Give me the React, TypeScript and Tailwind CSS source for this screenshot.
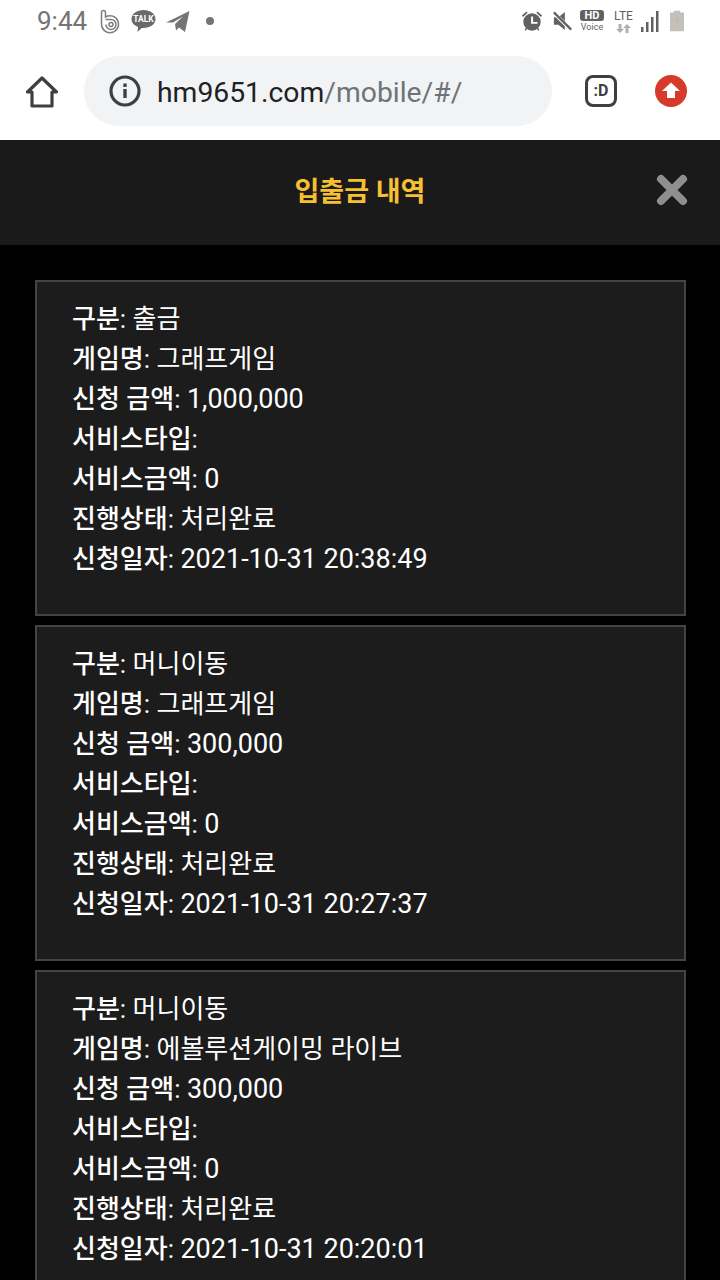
const records = [
  { type: '출금', game: '그래프게임', amount: '1,000,000', date: '2021-10-31 20:38:49' },
  { type: '머니이동', game: '그래프게임', amount: '300,000', date: '2021-10-31 20:27:37' },
  { type: '머니이동', game: '에볼루션게이밍 라이브', amount: '300,000', date: '2021-10-31 20:20:01' },
]

function Row({ label, value, num }: { label: string; value?: string; num?: boolean }) {
  return (
    <div className="h-10 leading-10 whitespace-nowrap">
      <b className="font-medium">{label}</b>: {num ? <span className="text-[27px]">{value}</span> : value}
    </div>
  )
}

function StatusBar() {
  return (
    <div className="h-[42px] flex items-center pl-[37px] pr-[36px] text-[#757575]">
      <span className="text-[26px] leading-none">9:44</span>
      {/* b logo */}
      <svg width="21" height="25" viewBox="0 0 21 25" fill="none" stroke="#7d7d7d" strokeWidth="1.500" className="ml-[13px]">
        <path d="M1.500 3.500a2 2 0 0 1 4 0V8a8.500 8.500 0 1 1-4 7z" />
        <path d="M5.500 10.500 H11a5 5 0 1 1-5 5" />
        <circle cx="11" cy="15.500" r="2" />
      </svg>
      {/* kakao talk */}
      <svg width="25" height="24" viewBox="0 0 25 24" className="ml-[10px]">
        <path d="M12.500 1C19 1 24.500 4.800 24.500 10s-5.500 9-12 9h-1.800l-4.200 4 .6-5C3 16.500.5 13.500.5 10c0-5.200 5.500-9 12-9z" fill="#6a6a6a" />
        <text x="12.500" y="13" textAnchor="middle" fontSize="8.500" fontWeight="700" fill="#fff" fontFamily="Roboto, sans-serif">TALK</text>
      </svg>
      {/* telegram */}
      <svg width="24" height="21" viewBox="0 0 24 21" className="ml-[10px]">
        <path d="M0 11.500 23.500 0 19 21l-6-4.500-3 3-1-6.500 8-7.500-10 6z" fill="#757575" />
      </svg>
      <span className="ml-[16px] w-2 h-2 rounded-full bg-[#757575]" />
      <div className="flex-1" />
      {/* alarm */}
      <svg width="22" height="22" viewBox="0 0 24 24" fill="#616161">
        <circle cx="12" cy="13" r="9.500" />
        <path d="M1 6 6 1.500 7.200 3 2.200 7.500zM23 6 18 1.500 16.800 3l5 4.500zM4 21l2-2 1 1-2 3zM20 21l-2-2-1 1 2 3z" />
        <path d="M11 7h2.200v6H18v2h-7z" fill="#fff" />
      </svg>
      {/* muted speaker */}
      <svg width="20" height="22" viewBox="0 0 22 24" className="ml-[10px]">
        <path d="M1 8h5l7-6v20l-7-6H1z" fill="#616161" />
        <path d="M1 3 20 22" stroke="#fff" strokeWidth="4" />
        <path d="M1 2.500 20 21.500" stroke="#616161" strokeWidth="2.500" />
      </svg>
      <div className="ml-[7px] w-[24px] flex flex-col items-center">
        <span className="w-[24px] h-[11px] rounded-[3px] bg-[#616161] text-white text-[11px] leading-[11px] font-bold text-center">HD</span>
        <span className="text-[9px] leading-[12px] text-[#616161]">Voice</span>
      </div>
      <div className="ml-[9px] w-[21px] flex flex-col items-center">
        <span className="text-[12px] leading-[13px] text-[#616161]">LTE</span>
        <svg width="15" height="9" viewBox="0 0 15 9" className="mt-px">
          <path d="M4 9 0 5h2.500V0h3v5H8zM11 0l4 4h-2.500v5h-3V4H7z" fill="#b0b0b0" />
        </svg>
      </div>
      <svg width="18" height="21" viewBox="0 0 18 21" fill="#616161" className="ml-[7px]">
        <rect x="0" y="16" width="2.500" height="5" />
        <rect x="5" y="11" width="2.500" height="10" />
        <rect x="10" y="6" width="2.500" height="15" />
        <rect x="15" y="0" width="2.500" height="21" />
      </svg>
      <svg width="14" height="22" viewBox="0 0 15 22" className="ml-[11px]">
        <path d="M4 0h7v2h4v20H0V2h4z" fill="#c4c0bc" />
        <rect x="7" y="7" width="1.500" height="6" fill="#d9a79b" />
      </svg>
    </div>
  )
}

function BrowserBar() {
  return (
    <div className="h-[98px] flex items-start pt-[14px]">
      <div className="w-[84px] h-[70px] flex items-center justify-center">
        <svg width="34" height="34" viewBox="0 0 34 34" fill="none" stroke="#3c4043" strokeWidth="3.200" strokeLinejoin="round" className="mt-[2px]">
          <path d="M2.500 17 17 3l14.500 14H27v14H7V17z" />
        </svg>
      </div>
      <div className="w-[468px] h-[70px] rounded-[35px] bg-[#f1f3f4] flex items-center pl-[25px]">
        <svg width="32" height="32" viewBox="0 0 32 32" fill="none">
          <circle cx="16" cy="16" r="14" stroke="#3c4043" strokeWidth="3.200" />
          <rect x="14.300" y="14" width="3.400" height="9" fill="#3c4043" />
          <rect x="14.300" y="8.500" width="3.400" height="3.400" fill="#3c4043" />
        </svg>
        <span className="ml-[16px] mt-[4px] text-[28.300px] text-[#202124] whitespace-nowrap">
          hm9651.com<span className="text-[#6f7377]">/mobile/#/</span>
        </span>
      </div>
      <div className="w-[98px] h-[70px] flex items-center justify-center">
        <div className="w-[32px] h-[32px] rounded-[8px] border-[3px] border-[#3c4043] flex items-center justify-center text-[16px] font-bold text-[#3c4043]">
          :D
        </div>
      </div>
      <div className="w-[32px] h-[70px] flex items-center justify-center ml-[5px]">
        <svg width="32" height="32" viewBox="0 0 32 32">
          <circle cx="16" cy="16" r="16" fill="#d63a2a" />
          <path d="M16 7.500 25 16h-5v7h-8v-7H7z" fill="#fff" />
        </svg>
      </div>
    </div>
  )
}

export default function App() {
  return (
    <div className="w-[720px] h-[1280px] overflow-hidden bg-black font-['Roboto','Noto_Sans_CJK_KR',sans-serif]">
      <div className="bg-white">
        <StatusBar />
        <BrowserBar />
      </div>

      {/* Header */}
      <div className="relative h-[105px] bg-[#1a1a1a] flex items-center justify-center">
        <h1 className="text-[27px] font-bold text-[#f7c033] mt-[-1px]">입출금 내역</h1>
        <svg width="32" height="32" viewBox="0 0 32 32" className="absolute left-[656px] top-[34px]">
          <path d="M5 5 27 27M27 5 5 27" stroke="#8f8f8f" strokeWidth="8" strokeLinecap="round" />
        </svg>
      </div>

      {/* Records */}
      <div className="flex flex-col gap-[9px] pt-[35px] pl-[35px] pr-[34px]">
        {records.map((r) => (
          <div key={r.date} className="h-[336px] shrink-0 bg-[#1c1c1c] border-2 border-[#444444] pt-[17px] pl-[35px] text-[26px] text-white">
            <Row label="구분" value={r.type} />
            <Row label="게임명" value={r.game} />
            <Row label="신청 금액" value={r.amount} num />
            <Row label="서비스타입" />
            <Row label="서비스금액" value="0" num />
            <Row label="진행상태" value="처리완료" />
            <Row label="신청일자" value={r.date} num />
          </div>
        ))}
      </div>
    </div>
  )
}
